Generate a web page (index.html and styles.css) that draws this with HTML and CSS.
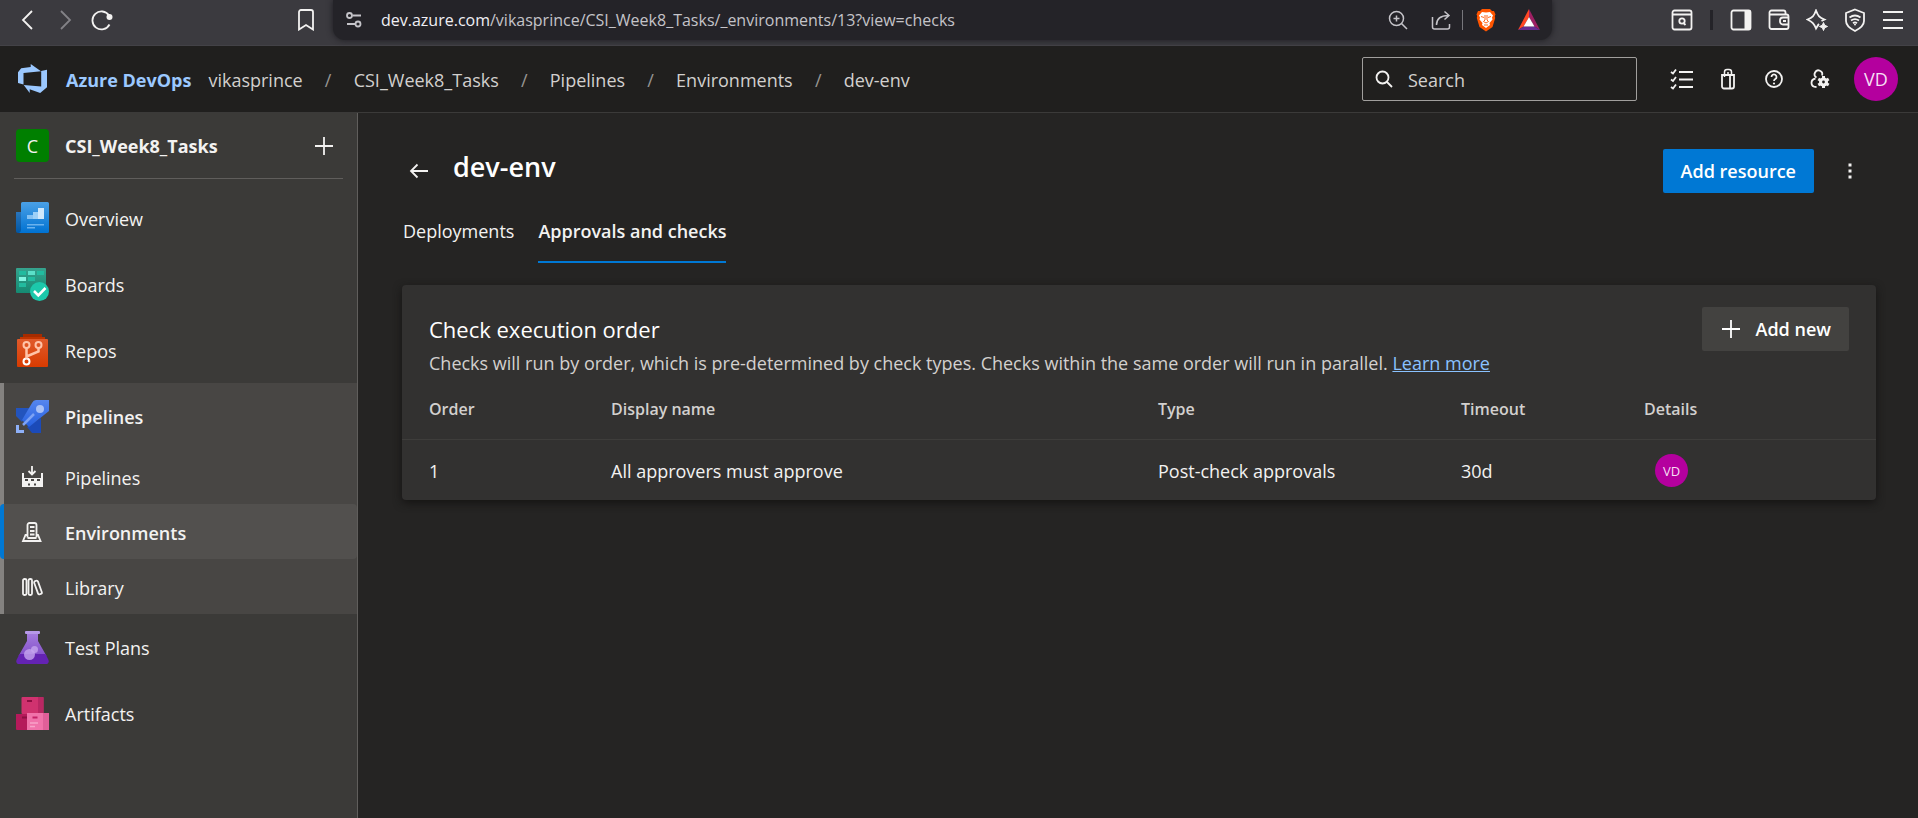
FILE: index.html
```html
<!DOCTYPE html>
<html lang="en">
<head>
<meta charset="utf-8">
<title>dev-env - Environments</title>
<link rel="stylesheet" href="styles.css">
</head>
<body>
<div class="browser">
  <div class="browser-nav">
    <button class="icon-btn" aria-label="Back"><svg width="22" height="22" viewBox="0 0 22 22"><path d="M15 2 6 11l9 9" class="ln w2"/></svg></button>
    <button class="icon-btn dim" aria-label="Forward"><svg width="22" height="22" viewBox="0 0 22 22"><path d="M7 2l9 9-9 9" class="ln w2"/></svg></button>
    <button class="icon-btn" aria-label="Reload"><svg width="22" height="22" viewBox="0 0 22 22"><path d="M18 6.500A9 9 0 1 0 18.500 15.500" class="ln w2"/><circle cx="18.500" cy="8" r="3" fill="currentColor"/></svg></button>
  </div>
  <button class="icon-btn bookmark" aria-label="Bookmark"><svg width="18" height="22" viewBox="0 0 18 22"><path d="M2 3a2 2 0 0 1 2-2h10a2 2 0 0 1 2 2v17.500L9 16l-7 4.500z" class="ln w2"/></svg></button>
  <div class="address">
    <svg class="site" width="18" height="18" viewBox="0 0 18 18"><path d="M7.500 4.500H16M2 13h8" class="ln w2"/><circle cx="4.500" cy="4.500" r="2.500" class="ln w2"/><circle cx="13" cy="13" r="2.500" class="ln w2"/></svg>
    <p class="url"><span class="host">dev.azure.com</span>/vikasprince/CSI_Week8_Tasks/_environments/13?view=checks</p>
    <div class="address-tools">
      <button class="icon-btn" aria-label="Zoom"><svg width="20" height="20" viewBox="0 0 20 20"><circle cx="8.500" cy="8.500" r="7" class="ln"/><path d="M13.500 13.500 19 19M8.500 5.500v6M5.500 8.500h6" class="ln"/></svg></button>
      <button class="icon-btn share" aria-label="Share"><svg width="20" height="20" viewBox="0 0 20 20"><path d="M1.500 7v10a2 2 0 0 0 2 2h13a2 2 0 0 0 2-2v-3M5.500 15c0-6 4-9.500 12-9.500M13.500 1.500l4.500 4-4.500 4" class="ln"/></svg></button>
      <span class="sep"></span>
      <button class="icon-btn brave" aria-label="Brave Shields"><svg width="20" height="24" viewBox="0 0 20 24"><path d="M6 1h8l2 2h2l1.500 3.500-.7 1.500.4 2-2.700 9L10 23.500 3.500 19 .8 10l.4-2L.5 6.500 2 3h2z" fill="#ff5500"/><path d="M10 4.500 14 4l3 3.500-1 2 .5 2-3 3.500 .5 2-4 3-4-3 .5-2-3-3.500 .5-2-1-2L6 4z" fill="#fff"/><path d="M5 8.500l3 1M15 8.500l-3 1M9 7v5l-1.500 1.500L10 15l2.500-1.500L11 12V7M8 17h4" fill="none" stroke="#ff5500" stroke-width=".9"/></svg></button>
      <button class="icon-btn" aria-label="Rewards"><svg width="24" height="24" viewBox="0 0 24 24"><path d="M12 1 1 22l5.500-3.500L12 9z" fill="#ff4724"/><path d="M12 1l11 21-5.500-3.500L12 9z" fill="#9e1f63"/><path d="M1 22h22l-5.500-3.500h-11z" fill="#662d91"/><path d="M12 9l5.500 9.500h-11z" fill="#fff"/></svg></button>
    </div>
  </div>
  <div class="browser-tools">
    <button class="icon-btn" aria-label="Search tabs"><svg width="22" height="22" viewBox="0 0 22 22"><rect x="1.500" y="1.500" width="19" height="19" rx="2" class="ln w2"/><path d="M1 5.500h20M12.500 14l2 2" class="ln w2"/><circle cx="11" cy="12" r="2.700" class="ln w2"/></svg></button>
    <span class="sep dark"></span>
    <button class="icon-btn" aria-label="Sidebar"><svg width="22" height="22" viewBox="0 0 22 22"><rect x="1.500" y="1.500" width="19" height="19" rx="2" class="ln w2"/><path d="M14.500 1.500h6v19h-6z" fill="currentColor"/></svg></button>
    <button class="icon-btn" aria-label="Wallet"><svg width="22" height="22" viewBox="0 0 22 22"><path d="M1.500 5.500h17a2 2 0 0 1 2 2V18a2 2 0 0 1-2 2h-15a2 2 0 0 1-2-2V3.500a2 2 0 0 1 2-2h12a2 2 0 0 1 2 2v2M20.500 8.500H15a3 3 0 0 0-3 3v1a3 3 0 0 0 3 3h5.500M15 12h3" class="ln w2"/></svg></button>
    <button class="icon-btn" aria-label="AI assistant"><svg width="22" height="22" viewBox="0 0 22 22"><path d="M13 15c-1 1-1.500 2-3 4.500C8 14.500 6.500 13 1.500 10.500 6.500 8.500 8 7 10 1.500c2 5.500 3.500 7 8.500 9l-3 1.500" class="ln w2"/><path d="M17.500 13.500l1.200 2.800 2.800 1.200-2.800 1.200-1.200 2.800-1.200-2.800-2.800-1.200 2.800-1.200z" fill="currentColor" stroke="currentColor"/></svg></button>
    <button class="icon-btn" aria-label="VPN"><svg width="22" height="24" viewBox="0 0 22 24"><path d="M11 1.500 20 5v8c0 4-4 7.500-9 10-5-2.500-9-6-9-10V5z" class="ln w2"/><path d="M5.500 9.500q5.500-4 11 0M7 12.500q4-2.800 8 0M9 15.200q2-1.500 4 0" class="ln w2"/><circle cx="11" cy="16.500" r="1" fill="currentColor"/></svg></button>
    <button class="icon-btn" aria-label="Menu"><svg width="22" height="20" viewBox="0 0 22 20"><path d="M1 2h20M1 10h20M1 18h20" class="ln w2"/></svg></button>
  </div>
</div>

<header class="header">
  <a class="brand" href="#">
    <svg width="32" height="32" viewBox="0 0 32 32"><path d="M30 6.700v17.600L23.200 30l-10.500-3.800v3.700L6.700 22l17.500 1.400V8.300L6.500 9.900v11.700L1 19.900V9.300L4.200 5.200 13.700 4V1l10.300 7.200V8z" fill="#9bc8ff"/></svg>
    <span class="brand-name">Azure DevOps</span>
  </a>
  <nav class="crumbs" aria-label="Breadcrumb">
    <a href="#">vikasprince</a><span class="slash">/</span><a href="#">CSI_Week8_Tasks</a><span class="slash">/</span><a href="#">Pipelines</a><span class="slash">/</span><a href="#">Environments</a><span class="slash">/</span><a href="#">dev-env</a>
  </nav>
  <label class="search">
    <svg width="20" height="20" viewBox="0 0 20 20"><circle cx="8.500" cy="8.500" r="6" class="ln w2"/><path d="M13 13l5 5" class="ln w2"/></svg>
    <input type="search" placeholder="Search" aria-label="Search">
  </label>
  <div class="header-tools">
    <button class="icon-btn" aria-label="Work items"><svg width="24" height="22" viewBox="0 0 24 22"><path d="M9 4h14M9 11.500h14M9 19h14M1 4l2 1.500L6 1.500M1 11.500 3 13l3-4M1 19l2 1.500 3-4" class="ln w2"/></svg></button>
    <button class="icon-btn" aria-label="Marketplace"><svg width="24" height="22" viewBox="0 0 24 22"><path d="M6 7h12v11.500a2 2 0 0 1-2 2H8a2 2 0 0 1-2-2zM14 7v13" class="ln w2"/><path d="M8.500 9V4a2.500 2.500 0 0 1 2.500-2.500h2A2.500 2.500 0 0 1 15.500 4v3M12 4v3" class="ln"/></svg></button>
    <button class="icon-btn" aria-label="Help"><svg width="24" height="22" viewBox="0 0 24 22"><circle cx="12" cy="11" r="8" class="ln w2"/><path d="M9.500 9a2.500 2.500 0 1 1 3.800 2.100Q12 12 12 13" class="ln w2"/><circle cx="12" cy="15.500" r="1.100" fill="currentColor"/></svg></button>
    <button class="icon-btn" aria-label="User settings"><svg width="24" height="22" viewBox="0 0 24 22"><path d="M8.500 9.500a3.800 3.800 0 1 1 5.500-2M7.500 10.500C4.500 11 3.500 12.500 3.500 15q0 4 5 4" class="ln w2"/><g transform="translate(15.500 14)" fill="currentColor"><circle r="4.500"/><path d="M-1.500-6h3v12h-3z"/><path d="M-1.500-6h3v12h-3z" transform="rotate(60)"/><path d="M-1.500-6h3v12h-3z" transform="rotate(120)"/><circle r="1.400" fill="#201f1e"/></g></svg></button>
    <button class="avatar" aria-label="Account">VD</button>
  </div>
</header>

<div class="body">
  <aside class="sidebar">
    <div class="project">
      <span class="project-icon">C</span>
      <a href="#" class="project-name">CSI_Week8_Tasks</a>
      <button class="icon-btn" aria-label="Create"><svg width="18" height="18" viewBox="0 0 18 18"><path d="M9 0v18M0 9h18" class="ln w2"/></svg></button>
    </div>
    <nav class="nav" aria-label="Project">
      <a class="item" href="#"><svg width="33" height="33" viewBox="0 0 33 33"><defs><linearGradient id="ov" x2="0" y2="1"><stop stop-color="#4aa0e6"/><stop offset="1" stop-color="#0072d2"/></linearGradient><linearGradient id="ovs" x2="0" y2="1"><stop stop-color="#2a75bb"/><stop offset="1" stop-color="#0057a5"/></linearGradient></defs><path d="M0 10h6v21H2a2 2 0 0 1-2-2z" fill="url(#ovs)"/><path d="M5 1.500a1.500 1.500 0 0 1 1.500-1.500h25a1.500 1.500 0 0 1 1.500 1.500v28a1.500 1.500 0 0 1-1.500 1.500H3q2-1 2-3z" fill="url(#ov)"/><path d="M11 13h6v4h-6z" fill="#83c1f3"/><path d="M17 10h5v7h-5z" fill="#9dd0f7"/><path d="M22 6h6v11h-6z" fill="#cfe8fc"/><path d="M11 22h17v1.500H11zM11 25h8v1.500h-8z" fill="#6ab2ee"/></svg><span>Overview</span></a>
      <a class="item" href="#"><svg width="33" height="33" viewBox="0 0 33 33"><defs><linearGradient id="bd" x2="0" y2="1"><stop stop-color="#36a38e"/><stop offset="1" stop-color="#158a72"/></linearGradient></defs><rect width="30" height="25" rx="1" fill="url(#bd)"/><path d="M3 3h7v4H3zM21 3h7v4h-7zM12 9h7v4h-7zM3 15h7v4H3z" fill="#22bb9f"/><path d="M12 3h7v4h-7z" fill="#5be0c9"/><path d="M3 9h7v4H3z" fill="#83f5e1"/><circle cx="23.500" cy="23.500" r="9.500" fill="#1cc8ab"/><path d="M18 23l4.300 4.300L29.500 20" fill="none" stroke="#fff" stroke-width="2.600"/></svg><span>Boards</span></a>
      <a class="item" href="#"><svg width="33" height="33" viewBox="0 0 33 33"><defs><linearGradient id="rp" x2="0" y2="1"><stop stop-color="#e05a2b"/><stop offset="1" stop-color="#d83b01"/></linearGradient></defs><path d="M7 0h19v4H7z" fill="#a52b00"/><path d="M4 3h25v3H4z" fill="#bf3400"/><rect x="1" y="5" width="31" height="28" rx="1" fill="url(#rp)"/><g fill="none" stroke="#ffc3a8" stroke-width="2"><circle cx="10.500" cy="11" r="3"/><circle cx="22.500" cy="11" r="3"/><circle cx="10.500" cy="27.500" r="3" stroke="#fff"/><path d="M10.500 14v10.500M22.500 14v3.500l-12 5" stroke-width="2.500"/></g></svg><span>Repos</span></a>
      <div class="group">
        <a class="item strong" href="#"><svg width="33" height="33" viewBox="0 0 33 33"><defs><linearGradient id="pl" x2="0" y2="1"><stop stop-color="#5686ee"/><stop offset="1" stop-color="#2560e0"/></linearGradient></defs><path d="M0 8h14L6 22l-6-6z" fill="#2354bd"/><path d="M25 18v15H16l-5-6z" fill="#1b4ab8"/><path d="M20 0h13v11L13 27 6 20 16 3q1.500-3 4-3z" fill="url(#pl)"/><circle cx="24" cy="9" r="4" fill="#a9c1f6"/><path d="M18 14 7 25" stroke="#7ea3f4" stroke-width="2.500"/><path d="M0 25h3v5h5v3H0z" fill="#8eb0f8"/></svg><span>Pipelines</span></a>
        <a class="item sub" href="#"><svg width="33" height="22" viewBox="0 0 33 22"><path d="M16 0v8M12.500 5l3.500 3.500L19.500 5" class="ln w2"/><path d="M6 7h2v5h17V7h2v14H6z" fill="currentColor"/><path d="M9 13h3v2H9zM15 13h3v2h-3zM21 13h3v2h-3zM12 17.500h2v2h-2zM18 17.500h2v2h-2z" fill="#484644"/></svg><span>Pipelines</span></a>
        <a class="item sub strong active" href="#"><svg width="33" height="22" viewBox="0 0 33 22"><path d="M11.500 16.500V4a2 2 0 0 1 2-2h5a2 2 0 0 1 2 2v12.500M11.500 14h-2L7 20h17.500L22 14h-1.500M11.500 17h9M14 6h4.500M14 10h4.500M14 13.500h4.500" class="ln w2"/></svg><span>Environments</span></a>
        <a class="item sub" href="#"><svg width="33" height="22" viewBox="0 0 33 22"><rect x="7" y="3" width="3.500" height="16" rx="1.500" class="ln w2"/><rect x="12.500" y="3" width="3.500" height="16" rx="1.500" class="ln w2"/><rect x="20" y="4.500" width="4" height="14" rx="1.500" class="ln w2" transform="rotate(-20 22 11.500)"/></svg><span>Library</span></a>
      </div>
      <a class="item" href="#"><svg width="33" height="33" viewBox="0 0 33 33"><defs><linearGradient id="tp" x2="0" y2="1"><stop stop-color="#a47cde"/><stop offset="1" stop-color="#8450c9"/></linearGradient></defs><path d="M11 2h11v8l8.500 15H2.500L11 10z" fill="url(#tp)"/><rect x="9" width="15" height="3" rx="1" fill="#b698e8"/><path d="M3.500 23h26l3 6q1 4-3 4h-26q-4 0-3-4z" fill="#6423b3"/><circle cx="13.500" cy="23.500" r="5.500" fill="#c5a5ef" opacity=".8"/><circle cx="18.500" cy="18.500" r="3.500" fill="#c5a5ef" opacity=".8"/></svg><span>Test Plans</span></a>
      <a class="item" href="#"><svg width="33" height="33" viewBox="0 0 33 33"><rect x="5.500" width="22" height="17" rx="1" fill="#d0326f"/><path d="M22 0h5.500v17H22z" fill="#b92763"/><path d="M0 17h11v16H1a1 1 0 0 1-1-1z" fill="#b51a5b"/><path d="M11 16h22v16a1 1 0 0 1-1 1H11z" fill="#f072aa"/><path d="M27 16h6v17h-6z" fill="#e05f99"/><path d="M11 3h5v2h-5zM6 19.500h5v2H6z" fill="#8e0e42"/><path d="M16.500 19.500h5v2h-5z" fill="#c52167"/><path d="M14 26h8M14 29.500h5" stroke="#f7a3c9" stroke-width="1.500"/></svg><span>Artifacts</span></a>
    </nav>
  </aside>

  <main class="main">
    <div class="title-row">
      <button class="icon-btn back" aria-label="Back to environments"><svg width="20" height="16" viewBox="0 0 20 16"><path d="M19 8H2M8.500 1.500 2 8l6.500 6.500" class="ln w2"/></svg></button>
      <h1>dev-env</h1>
      <button class="btn primary">Add resource</button>
      <button class="icon-btn more" aria-label="More actions"><svg width="20" height="20" viewBox="0 0 20 20" fill="currentColor"><path d="M8.500 2.500h3v3h-3zM8.500 8.500h3v3h-3zM8.500 14.500h3v3h-3z"/></svg></button>
    </div>
    <nav class="tabs" aria-label="Views">
      <a class="tab" href="#">Deployments</a>
      <a class="tab selected" href="#">Approvals and checks</a>
    </nav>
    <section class="card">
      <div class="card-head">
        <div>
          <h2>Check execution order</h2>
          <p class="desc">Checks will run by order, which is pre-determined by check types. Checks within the same order will run in parallel. <a href="#">Learn more</a></p>
        </div>
        <button class="btn add"><svg width="18" height="18" viewBox="0 0 18 18"><path d="M9 0v18M0 9h18" class="ln w2"/></svg>Add new</button>
      </div>
      <table class="checks">
        <colgroup><col class="c-order"><col class="c-name"><col class="c-type"><col class="c-time"><col></colgroup>
        <thead><tr><th>Order</th><th>Display name</th><th>Type</th><th>Timeout</th><th>Details</th></tr></thead>
        <tbody><tr><td>1</td><td>All approvers must approve</td><td>Post-check approvals</td><td>30d</td><td><span class="avatar small">VD</span></td></tr></tbody>
      </table>
    </section>
  </main>
</div>
</body>
</html>
```
FILE: styles.css
```css
* { box-sizing: border-box; }
body {
  margin: 0;
  min-height: 100vh;
  display: flex;
  flex-direction: column;
  background: #252423;
  color: #f3f2f1;
  font: 18px/24px "Segoe UI", "Open Sans", "Noto Sans", sans-serif;
}
h1, h2, p { margin: 0; }
a { color: inherit; text-decoration: none; }
svg { display: block; flex: none; }
.ln { fill: none; stroke: currentColor; stroke-width: 1.5; }
.w2 { stroke-width: 1.8; }
.icon-btn {
  display: flex;
  padding: 0;
  border: 0;
  background: none;
  color: #f3f2f1;
}

/* browser toolbar */
.browser {
  display: flex;
  align-items: center;
  height: 46px;
  padding: 0 14px 5px 17px;
  background: #3b3a3f;
  border-bottom: 1px solid #434247;
}
.browser-nav { display: flex; gap: 15px; flex: none; }
.dim { color: #838287; }
.bookmark { margin: 0 18px 0 184px; }
.address {
  flex: 1;
  display: flex;
  align-items: center;
  align-self: stretch;
  margin-right: 119px;
  padding: 0 11px 0 12px;
  border-radius: 0 0 12px 12px;
  background: #242328;
  box-shadow: 0 0 6px #1c1b20;
  color: #c5c4c9;
}
.url { flex: 1; margin-left: 18px; font-size: 16px; }
.host { color: #f0eff4; }
.address-tools { display: flex; align-items: center; }
.address-tools .icon-btn { color: #c5c4c9; }
.address-tools .share { margin: 0 11px 0 23px; }
.address-tools .brave { margin: 0 21px 0 13px; }
.sep { width: 1px; height: 20px; background: #77767b; }
.sep.dark { width: 3px; background: #242328; margin: 0 1px; }
.browser-tools { display: flex; align-items: center; gap: 16px; }

/* site header */
.header {
  display: flex;
  align-items: center;
  height: 67px;
  padding: 0 20px 0 17px;
  background: #201f1e;
  border-bottom: 1px solid #3b3a39;
  color: #d2d0ce;
}
.brand { display: flex; align-items: center; gap: 17px; color: #9bc8ff; font-weight: 700; }
.brand-name, .crumbs, .item span { padding-top: 2px; }
.crumbs { display: flex; flex: 1; margin-left: 17px; }
.slash { width: 51px; text-align: center; color: #979593; }
.search {
  display: flex;
  align-items: center;
  gap: 14px;
  width: 275px;
  height: 44px;
  padding: 0 11px;
  border: 1px solid #a19f9d;
  border-radius: 2px;
  color: #f3f2f1;
}
.search input {
  min-width: 0;
  flex: 1;
  padding: 2px 0 0;
  border: 0;
  background: none;
  color: inherit;
  font: inherit;
}
.search input::placeholder { color: #d2d0ce; opacity: 1; }
.header-tools { display: flex; align-items: center; gap: 22px; margin-left: 33px; }
.avatar {
  display: grid;
  place-items: center;
  width: 44px;
  height: 44px;
  padding: 0;
  border: 0;
  border-radius: 50%;
  background: #b4009e;
  color: #f6dff3;
  font: inherit;
}
.avatar.small { width: 33px; height: 33px; margin-left: 11px; font-size: 13px; }

/* layout */
.body { flex: 1; display: flex; }
.sidebar {
  flex: none;
  width: 358px;
  background: #3b3a38;
  border-right: 1px solid #605e5c;
}
.project {
  display: flex;
  align-items: center;
  height: 66px;
  margin: 0 14px 6px;
  padding: 0 10px 0 2px;
  border-bottom: 1px solid #605e5c;
}
.project-icon {
  display: grid;
  place-items: center;
  width: 33px;
  height: 33px;
  border-radius: 4px;
  background: #007f00;
}
.project-name { flex: 1; margin-left: 16px; font-weight: 700; }
.item {
  display: flex;
  align-items: center;
  gap: 16px;
  height: 66px;
  padding-left: 16px;
}
.strong { font-weight: 600; }
.group { background: #484644; border-left: 4px solid #848280; }
.group .item { padding-left: 12px; }
.group .sub { height: 55px; }
.group .active {
  margin-left: -4px;
  border-left: 4px solid #0078d4;
  border-radius: 4px;
  background: #52504e;
}

/* page content */
.main { flex: 1; min-width: 0; padding: 32px 42px 32px 44px; }
.title-row { display: flex; align-items: center; height: 52px; }
.back { margin: 0 24px 0 7px; }
h1 { flex: 1; padding-bottom: 8px; font-size: 27px; line-height: 32px; font-weight: 600; color: #fff; }
.btn {
  display: flex;
  align-items: center;
  gap: 16px;
  flex: none;
  height: 44px;
  padding: 0 18px;
  border: 0;
  border-radius: 2px;
  background: #434240;
  color: #fff;
  font: inherit;
  font-weight: 600;
}
.primary { background: #0078d4; }
.add { padding-left: 20px; }
.more { margin: 0 16px 0 26px; }
.tabs { display: flex; gap: 24px; margin-bottom: 22px; padding-left: 1px; }
.tab { padding: 22px 0 18px; border-bottom: 2px solid transparent; }
.selected { border-color: #0078d4; font-weight: 600; }
.card {
  overflow: hidden;
  border-radius: 4px;
  background: #323130;
  box-shadow: 0 3px 8px #151413;
}
.card-head {
  display: flex;
  justify-content: space-between;
  align-items: flex-start;
  padding: 22px 27px 0;
}
h2 { font-size: 22px; line-height: 44px; font-weight: 400; color: #fff; }
.desc { color: #d2d0ce; }
.desc a { color: #8ac2ff; text-decoration: underline; }
.checks { width: 100%; border-collapse: collapse; table-layout: fixed; }
.c-order { width: 209px; }
.c-name { width: 547px; }
.c-type { width: 303px; }
.c-time { width: 183px; }
.checks th {
  height: 64px;
  padding: 4px 0 0;
  border-bottom: 1px solid #3e3d3b;
  text-align: left;
  font-size: 16px;
  font-weight: 600;
  color: #d2d0ce;
}
.checks td { height: 61px; padding: 2px 0 0; }
.checks th:first-child, .checks td:first-child { padding-left: 27px; }
```
